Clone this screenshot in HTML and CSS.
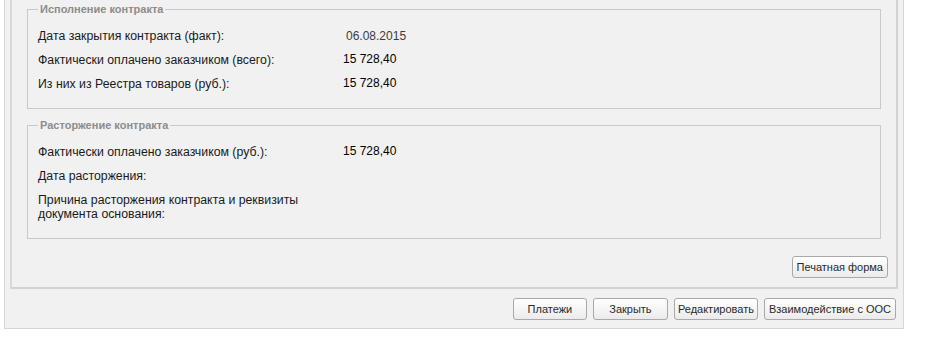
FILE: index.html
```html
<!DOCTYPE html>
<html lang="ru">
<head>
<meta charset="utf-8">
<title>Контракт</title>
<link rel="stylesheet" href="styles.css">
</head>
<body>
<div class="outer">
  <div class="inner">
    <fieldset class="group first">
      <legend>Исполнение контракта</legend>
      <div class="rows">
        <div class="label">Дата закрытия контракта (факт):</div>
        <div class="value date">06.08.2015</div>
        <div class="label">Фактически оплачено заказчиком (всего):</div>
        <div class="value">15 728,40</div>
        <div class="label">Из них из Реестра товаров (руб.):</div>
        <div class="value">15 728,40</div>
      </div>
    </fieldset>
    <fieldset class="group second">
      <legend>Расторжение контракта</legend>
      <div class="rows">
        <div class="label">Фактически оплачено заказчиком (руб.):</div>
        <div class="value">15 728,40</div>
        <div class="label">Дата расторжения:</div>
        <div class="value"></div>
        <div class="label">Причина расторжения контракта и реквизиты документа основания:</div>
        <div class="value"></div>
      </div>
    </fieldset>
    <div class="print-bar">
      <button class="btn">Печатная форма</button>
    </div>
  </div>
  <div class="actions">
    <button class="btn w74">Платежи</button>
    <button class="btn w75">Закрыть</button>
    <button class="btn tight">Редактировать</button>
    <button class="btn">Взаимодействие с ООС</button>
  </div>
</div>
</body>
</html>
```

FILE: styles.css
```css
html, body {
  margin: 0;
  padding: 0;
  background: #ffffff;
  font-family: "Liberation Sans", Arial, sans-serif;
}

.outer {
  margin-left: 4px;
  width: 888px;
  background: #f1f1f1;
  border: 1px solid #d6d6d6;
  border-top: none;
  padding: 0 5px 8px 5px;
}

.inner {
  border: 2px solid #d3d3d3;
  border-top: none;
  border-left-color: #d8d8d8;
  padding: 2px 15px 9px 15px;
}

.group {
  margin: 0;
  padding: 13px 10px 17px 10px;
  border: 1px solid #c9c9c9;
  min-inline-size: 0;
}

.group.second {
  margin-top: 9px;
}

.group legend {
  padding: 0 2px;
  margin: 0;
  font-size: 11px;
  line-height: 14px;
  font-weight: bold;
  color: #8c8c8c;
}

.rows {
  display: grid;
  grid-template-columns: 305px 1fr;
  row-gap: 10px;
  font-size: 12px;
  line-height: 14px;
}

.label {
  color: #1a1a1a;
  font-size: 12.3px;
  padding-right: 4px;
}

.value {
  color: #000;
  margin-top: -1px;
}

.value.date {
  color: #3c3c3c;
  padding-left: 3px;
  margin-top: 0;
}

.print-bar {
  display: flex;
  justify-content: flex-end;
  margin-top: 17px;
  margin-right: -7px;
}

.actions {
  display: flex;
  justify-content: flex-end;
  gap: 6px;
  margin-top: 9px;
  padding-right: 2px;
}

.btn {
  height: 22px;
  margin: 0;
  padding: 0 4px;
  font-family: "Liberation Sans", Arial, sans-serif;
  font-size: 11px;
  color: #2a2a2a;
  background: linear-gradient(#ffffff, #ebebeb);
  border: 1px solid #a9a9a9;
  border-radius: 3px;
  box-shadow: 0 1px 0 rgba(255,255,255,0.8) inset;
}

.btn.w74 {
  width: 74px;
}

.btn.w75 {
  width: 75px;
}

.btn.tight {
  padding: 0 3px;
}
```
